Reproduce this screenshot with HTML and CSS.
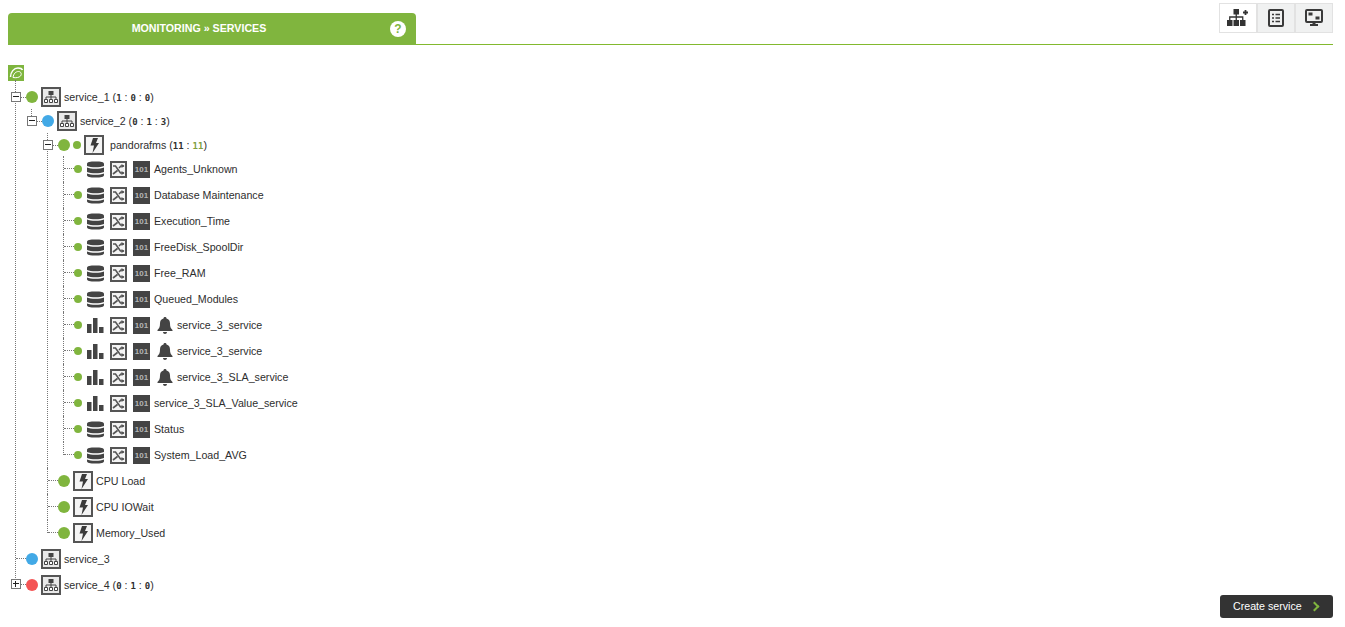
FILE: index.html
```html
<!DOCTYPE html>
<html lang="en">
<head>
    <meta charset="UTF-8">
    <title>Monitoring - Services</title>
    <link rel="stylesheet" href="styles.css">
</head>
<body>
    <!-- shared icons -->
    <svg class="defs" width="0" height="0">
        <symbol id="i-service" viewBox="0 0 20 20">
            <rect x="1" y="1" width="18" height="18" fill="#e9e9e9" stroke="#555" stroke-width="2"/>
            <path d="M7.500 4h5v4h-5z" fill="#444"/>
            <path d="M10 8v4M5 12v-2h10v2" fill="none" stroke="#444"/>
            <path d="M3.500 12.500h3v3h-3zM8.500 12.500h3v3h-3zM13.500 12.500h3v3h-3z" fill="#fff" stroke="#444"/>
        </symbol>
        <symbol id="i-bolt" viewBox="0 0 20 20">
            <rect x="1" y="1" width="18" height="18" fill="#f4f4f4" stroke="#555" stroke-width="2"/>
            <path d="M9 3h5l-2 5h3L8.500 18l1.500-7.500H6.500z" fill="#3a3a3a"/>
        </symbol>
        <symbol id="i-db" viewBox="0 0 17 17">
            <path d="M0 3c0-2 3-2.500 8.500-2.500S17 1 17 3v2c-2 1-5 1.300-8.500 1.300S2 6 0 5zM0 6.500c2 1 5 1.300 8.500 1.300S15 7.500 17 6.500V11c-2 1-5 1.300-8.500 1.300S2 12 0 11zM0 12.500c2 1 5 1.300 8.500 1.300s6.500-.3 8.500-1.300V14c0 2-3 2.500-8.500 2.500S0 16 0 14z" fill="#444"/>
        </symbol>
        <symbol id="i-bars" viewBox="0 0 17 17">
            <path d="M0 7h4.500v9H0zM6 1h4.500v15H6zM12 10h4.500v6H12z" fill="#444"/>
        </symbol>
        <symbol id="i-switch" viewBox="0 0 17 17">
            <rect x="1" y="1" width="15" height="15" fill="#f4f4f4" stroke="#555" stroke-width="2"/>
            <path d="M3 5h2.500l5 7H14M3 13l4.500-3.500M9 7l2-2h3" fill="none" stroke="#555" stroke-width="1.600"/>
            <path d="M11.500 3l3 2-3 2zM11.500 10l3 2-3 2z" fill="#555"/>
        </symbol>
        <symbol id="i-bell" viewBox="0 0 16 17">
            <path d="M8 0c1 0 1.500.6 1.500 1.400C12 2 13 4 13 6.500c0 3.500.8 5 2.500 6.500v1H.5v-1C2.200 11.500 3 10 3 6.500 3 4 4 2 6.500 1.400 6.500.6 7 0 8 0zM6 15h4c0 1.200-.9 2-2 2s-2-.8-2-2z" fill="#444"/>
        </symbol>
    </svg>

    <header class="page-header">
        <div class="tab">
            <h1 class="tab-title">MONITORING » SERVICES</h1>
            <span class="help">?</span>
        </div>
        <nav class="view-buttons">
            <a class="view-btn active">
                <svg width="22" height="18" viewBox="0 0 22 18"><path d="M6.500 0h5.500v5.500H6.500zM0 11h5.500v6H0zM6.500 11H12v6H6.500zM13 11h5.500v6H13z" fill="#333"/><path d="M9.250 5v6M2.750 11V8h13v3" fill="none" stroke="#333" stroke-width="1.300"/><path d="M16 3.500h5M18.500 1v5" stroke="#333" stroke-width="1.800"/></svg>
            </a>
            <a class="view-btn">
                <svg width="16" height="18" viewBox="0 0 16 18"><rect x="1" y="1" width="14" height="16" rx="1" fill="none" stroke="#3a3a3a" stroke-width="2"/><path d="M4 5.500h2M7.500 5.500H12M4 9h2M7.500 9H12M4 12.500h2M7.500 12.500H12" stroke="#3a3a3a" stroke-width="1.300"/></svg>
            </a>
            <a class="view-btn">
                <svg width="18" height="18" viewBox="0 0 18 18"><rect x="1" y="1" width="16" height="12" rx="1" fill="none" stroke="#3a3a3a" stroke-width="2"/><path d="M3.500 3.500h4v3h-4zM10.500 7.500h4v3h-4zM7.500 13h3v2h-3zM5 15h8v2H5z" fill="#3a3a3a"/></svg>
            </a>
        </nav>
    </header>

    <main class="tree">
        <div class="tree-root">
            <svg width="16" height="16" viewBox="0 0 16 16"><rect width="16" height="16" fill="#7eb53e"/><path d="M2.500 12C2.500 7 6 3 10 3c2.500 0 4 .8 4.500 2" fill="none" stroke="#fff" stroke-width="1.500"/><path d="M5 12.500c3 .5 6 .2 7.500-1.500 1.500-2 .5-4.500-2-4.500C8 6.500 5.500 8.500 5 12.500z" fill="none" stroke="#fff"/></svg>
        </div>
        <ul class="nodes">
            <li>
                <div class="row open">
                    <span class="slot"><span class="exp minus"></span></span>
                    <span class="dot green"></span>
                    <svg class="ico20"><use href="#i-service"/></svg>
                    <span class="name">service_1 <span class="counts">(<b>1</b> : <b>0</b> : <b>0</b>)</span></span>
                </div>
                <ul class="nodes">
                    <li>
                        <div class="row open">
                            <span class="slot"><span class="exp minus"></span></span>
                            <span class="dot blue"></span>
                            <svg class="ico20"><use href="#i-service"/></svg>
                            <span class="name">service_2 <span class="counts">(<b>0</b> : <b>1</b> : <b>3</b>)</span></span>
                        </div>
                        <ul class="nodes">
                            <li>
                                <div class="row open">
                                    <span class="slot"><span class="exp minus"></span></span>
                                    <span class="dot green"></span>
                                    <span class="dot-sm green"></span>
                                    <svg class="ico20"><use href="#i-bolt"/></svg>
                                    <span class="name agent">pandorafms <span class="counts">(<b>11</b> : <b class="ok">11</b>)</span></span>
                                </div>
                                <ul class="nodes modules">
                                    <li><div class="row"><span class="slot"></span><span class="dot-sm green"></span><svg class="ico17"><use href="#i-db"/></svg><svg class="ico17"><use href="#i-switch"/></svg><span class="bin">101</span><span class="name">Agents_Unknown</span></div></li>
                                    <li><div class="row"><span class="slot"></span><span class="dot-sm green"></span><svg class="ico17"><use href="#i-db"/></svg><svg class="ico17"><use href="#i-switch"/></svg><span class="bin">101</span><span class="name">Database Maintenance</span></div></li>
                                    <li><div class="row"><span class="slot"></span><span class="dot-sm green"></span><svg class="ico17"><use href="#i-db"/></svg><svg class="ico17"><use href="#i-switch"/></svg><span class="bin">101</span><span class="name">Execution_Time</span></div></li>
                                    <li><div class="row"><span class="slot"></span><span class="dot-sm green"></span><svg class="ico17"><use href="#i-db"/></svg><svg class="ico17"><use href="#i-switch"/></svg><span class="bin">101</span><span class="name">FreeDisk_SpoolDir</span></div></li>
                                    <li><div class="row"><span class="slot"></span><span class="dot-sm green"></span><svg class="ico17"><use href="#i-db"/></svg><svg class="ico17"><use href="#i-switch"/></svg><span class="bin">101</span><span class="name">Free_RAM</span></div></li>
                                    <li><div class="row"><span class="slot"></span><span class="dot-sm green"></span><svg class="ico17"><use href="#i-db"/></svg><svg class="ico17"><use href="#i-switch"/></svg><span class="bin">101</span><span class="name">Queued_Modules</span></div></li>
                                    <li><div class="row"><span class="slot"></span><span class="dot-sm green"></span><svg class="ico17"><use href="#i-bars"/></svg><svg class="ico17"><use href="#i-switch"/></svg><span class="bin">101</span><svg class="bell"><use href="#i-bell"/></svg><span class="name">service_3_service</span></div></li>
                                    <li><div class="row"><span class="slot"></span><span class="dot-sm green"></span><svg class="ico17"><use href="#i-bars"/></svg><svg class="ico17"><use href="#i-switch"/></svg><span class="bin">101</span><svg class="bell"><use href="#i-bell"/></svg><span class="name">service_3_service</span></div></li>
                                    <li><div class="row"><span class="slot"></span><span class="dot-sm green"></span><svg class="ico17"><use href="#i-bars"/></svg><svg class="ico17"><use href="#i-switch"/></svg><span class="bin">101</span><svg class="bell"><use href="#i-bell"/></svg><span class="name">service_3_SLA_service</span></div></li>
                                    <li><div class="row"><span class="slot"></span><span class="dot-sm green"></span><svg class="ico17"><use href="#i-bars"/></svg><svg class="ico17"><use href="#i-switch"/></svg><span class="bin">101</span><span class="name">service_3_SLA_Value_service</span></div></li>
                                    <li><div class="row"><span class="slot"></span><span class="dot-sm green"></span><svg class="ico17"><use href="#i-db"/></svg><svg class="ico17"><use href="#i-switch"/></svg><span class="bin">101</span><span class="name">Status</span></div></li>
                                    <li><div class="row"><span class="slot"></span><span class="dot-sm green"></span><svg class="ico17"><use href="#i-db"/></svg><svg class="ico17"><use href="#i-switch"/></svg><span class="bin">101</span><span class="name">System_Load_AVG</span></div></li>
                                </ul>
                            </li>
                            <li><div class="row"><span class="slot"></span><span class="dot green"></span><svg class="ico20"><use href="#i-bolt"/></svg><span class="name">CPU Load</span></div></li>
                            <li><div class="row"><span class="slot"></span><span class="dot green"></span><svg class="ico20"><use href="#i-bolt"/></svg><span class="name">CPU IOWait</span></div></li>
                            <li><div class="row"><span class="slot"></span><span class="dot green"></span><svg class="ico20"><use href="#i-bolt"/></svg><span class="name">Memory_Used</span></div></li>
                        </ul>
                    </li>
                </ul>
            </li>
            <li><div class="row"><span class="slot"></span><span class="dot blue"></span><svg class="ico20"><use href="#i-service"/></svg><span class="name">service_3</span></div></li>
            <li>
                <div class="row">
                    <span class="slot"><span class="exp plus"></span></span>
                    <span class="dot red"></span>
                    <svg class="ico20"><use href="#i-service"/></svg>
                    <span class="name">service_4 <span class="counts">(<b>0</b> : <b>1</b> : <b>0</b>)</span></span>
                </div>
            </li>
        </ul>
    </main>

    <div class="actions">
        <button class="create-btn" type="button">Create service <span class="chev"></span></button>
    </div>
</body>
</html>
```

FILE: styles.css
```css
* {
    box-sizing: border-box;
}
body {
    font-family: "Liberation Sans", Arial, sans-serif;
    font-size: 8pt;
    color: #333;
    margin: 0;
    padding: 0 12px 0 8px;
    background: #fff;
}
.defs {
    display: block;
    height: 0;
}
.page-header {
    display: flex;
    justify-content: space-between;
    align-items: flex-start;
    height: 45px;
    padding-top: 3px;
    border-bottom: 1px solid #82b92e;
}
.tab {
    display: flex;
    align-items: center;
    width: 408px;
    height: 32px;
    margin-top: 10px;
    padding-right: 10px;
    background: #80b53e;
    border-radius: 4px 4px 0 0;
}
.tab-title {
    flex: 1;
    margin: 0 0 2px;
    font-size: 8pt;
    font-weight: bold;
    color: #fff;
    text-align: center;
}
.help {
    width: 16px;
    height: 16px;
    border-radius: 50%;
    background: #fff;
    color: #80b53e;
    font-size: 12px;
    font-weight: bold;
    line-height: 16px;
    text-align: center;
}
.view-buttons {
    display: flex;
}
.view-btn {
    display: flex;
    align-items: center;
    justify-content: center;
    width: 38px;
    height: 30px;
    background: #f0f1f1;
    border: 1px solid #e2e2e2;
}
.view-btn.active {
    background: #fff;
}
.tree {
    padding-top: 20px;
}
.tree-root {
    height: 20px;
}
.tree-root svg {
    display: block;
}
.nodes {
    list-style: none;
    margin: 0;
    padding: 0;
}
.nodes .nodes {
    margin-left: 16px;
}
.nodes li {
    position: relative;
}
/* dotted tree lines */
.nodes li::before {
    content: "";
    position: absolute;
    left: 7px;
    top: -5px;
    bottom: 0;
    border-left: 1px dotted #777;
}
.nodes .nodes li::before {
    top: 0;
}
.nodes li:last-child::before {
    bottom: auto;
    height: 13px;
}
.modules {
    margin-top: -1px;
}
.row {
    position: relative;
    display: flex;
    align-items: center;
    height: 26px;
}
.row.open {
    height: 24px;
}
.slot {
    position: relative;
    flex: none;
    width: 18px;
    height: 100%;
}
.slot::after {
    content: "";
    position: absolute;
    left: 8px;
    right: 0;
    top: 12px;
    border-top: 1px dotted #777;
}
.exp {
    position: absolute;
    z-index: 1;
    left: 3px;
    top: 7px;
    width: 10px;
    height: 10px;
    background: #fff;
    border: 1px solid #777;
}
.exp::before {
    content: "";
    position: absolute;
    left: 1px;
    top: 3px;
    width: 6px;
    height: 1px;
    background: #222;
}
.plus::after {
    content: "";
    position: absolute;
    left: 3px;
    top: 1px;
    width: 1px;
    height: 6px;
    background: #222;
}
.dot {
    flex: none;
    width: 12px;
    height: 12px;
    margin-right: 3px;
    border-radius: 50%;
}
.dot-sm {
    flex: none;
    width: 8px;
    height: 8px;
    margin-right: 5px;
    border-radius: 50%;
}
.dot + .dot-sm {
    margin-right: 3px;
}
.green {
    background: #80b53e;
}
.blue {
    background: #42a9e6;
}
.red {
    background: #f45454;
}
.ico20 {
    flex: none;
    width: 20px;
    height: 20px;
    margin-right: 3px;
}
.ico17 {
    flex: none;
    width: 17px;
    height: 17px;
    margin-right: 6px;
}
.bin {
    flex: none;
    width: 17px;
    height: 17px;
    margin-right: 4px;
    background: #444;
    color: #b5b5b5;
    font-size: 8px;
    font-weight: bold;
    line-height: 17px;
    text-align: center;
}
.bell {
    flex: none;
    width: 16px;
    height: 17px;
    margin: 0 4px 0 3px;
}
.name {
    white-space: nowrap;
    color: #2e2e2e;
}
.agent {
    margin-left: 3px;
}
.counts b {
    font-family: "DejaVu Sans Mono", monospace;
    font-size: 9px;
}
.counts .ok {
    color: #80a03e;
}
.actions {
    display: flex;
    justify-content: flex-end;
    margin-top: -3px;
}
.create-btn {
    display: flex;
    align-items: center;
    justify-content: space-between;
    width: 113px;
    height: 23px;
    padding: 0 13px 2px;
    background: #333;
    border: none;
    border-radius: 3px;
    color: #fff;
    font-family: inherit;
    font-size: 8pt;
}
.chev {
    width: 7px;
    height: 7px;
    margin: 2px 2px 0 0;
    border-top: 2px solid #80b53e;
    border-right: 2px solid #80b53e;
    transform: rotate(45deg);
}
```
